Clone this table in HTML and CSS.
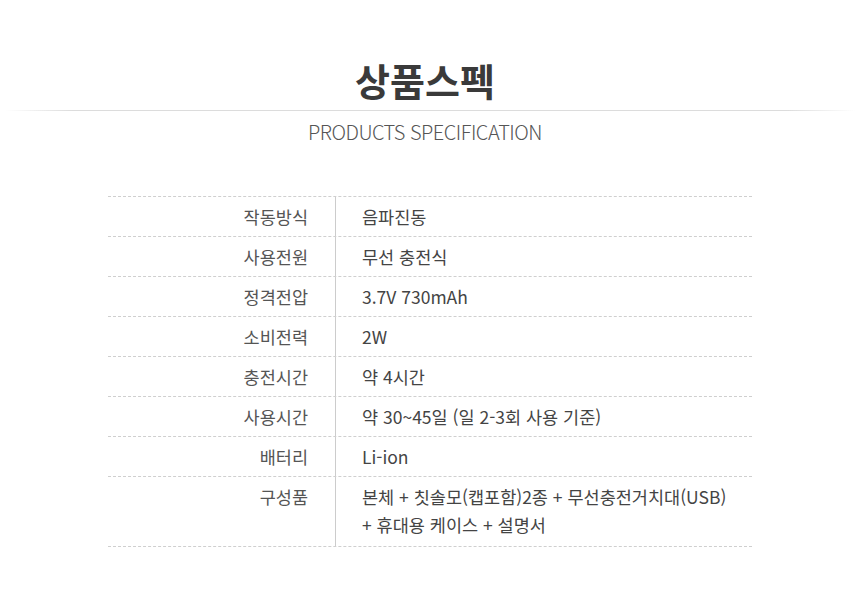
FILE: index.html
```html
<!DOCTYPE html>
<html lang="ko">
<head>
<meta charset="utf-8">
<title>상품스펙</title>
<link rel="stylesheet" href="styles.css">
</head>
<body>
<section class="spec">
  <h1 class="spec-title">상품스펙</h1>
  <div class="spec-rule"></div>
  <p class="spec-sub">PRODUCTS SPECIFICATION</p>
  <div class="spec-table">
    <div class="spec-row"><div class="spec-key">작동방식</div><div class="spec-val">음파진동</div></div>
    <div class="spec-row"><div class="spec-key">사용전원</div><div class="spec-val">무선 충전식</div></div>
    <div class="spec-row"><div class="spec-key">정격전압</div><div class="spec-val">3.7V 730mAh</div></div>
    <div class="spec-row"><div class="spec-key">소비전력</div><div class="spec-val">2W</div></div>
    <div class="spec-row"><div class="spec-key">충전시간</div><div class="spec-val">약 4시간</div></div>
    <div class="spec-row"><div class="spec-key">사용시간</div><div class="spec-val">약 30~45일 (일 2-3회 사용 기준)</div></div>
    <div class="spec-row"><div class="spec-key">배터리</div><div class="spec-val">Li-ion</div></div>
    <div class="spec-row spec-row-tall"><div class="spec-key">구성품</div><div class="spec-val">본체 + 칫솔모(캡포함)2종 + 무선충전거치대(USB)<br>+ 휴대용 케이스 + 설명서</div></div>
  </div>
</section>
</body>
</html>
```
FILE: styles.css
```css
html, body {
  margin: 0;
  padding: 0;
  background: #fff;
}
body {
  font-family: "Noto Sans CJK KR", "Noto Sans", sans-serif;
  color: #444;
}
.spec {
  padding-top: 59px;
}
.spec-title {
  margin: 0;
  padding-right: 10px;
  text-align: center;
  font-size: 38px;
  line-height: 42px;
  font-weight: 700;
  color: #3a3a3a;
}
.spec-rule {
  height: 1px;
  margin: 9px 5px 0;
  background: linear-gradient(to right, rgba(221,221,221,0) 0%, #dcdcdc 8%, #dcdcdc 92%, rgba(221,221,221,0) 100%);
}
.spec-sub {
  margin: 9px 0 0;
  padding-right: 10px;
  text-align: center;
  font-size: 20px;
  line-height: 24px;
  font-weight: 300;
  letter-spacing: -0.5px;
  color: #555;
}
.spec-table {
  width: 644px;
  margin: 52px auto 0;
  border-bottom: 1px dashed #cfcfcf;
}
.spec-row {
  display: flex;
  border-top: 1px dashed #cfcfcf;
  font-size: 17.5px;
  line-height: 28px;
}
.spec-key {
  width: 200px;
  flex: none;
  padding: 6px 27px 5px 0;
  text-align: right;
  border-right: 1px solid #cccccc;
  color: #555;
}
.spec-val {
  padding: 6px 0 5px 26px;
  color: #444;
}
.spec-row-tall .spec-key,
.spec-row-tall .spec-val {
  padding-bottom: 7px;
}
```
